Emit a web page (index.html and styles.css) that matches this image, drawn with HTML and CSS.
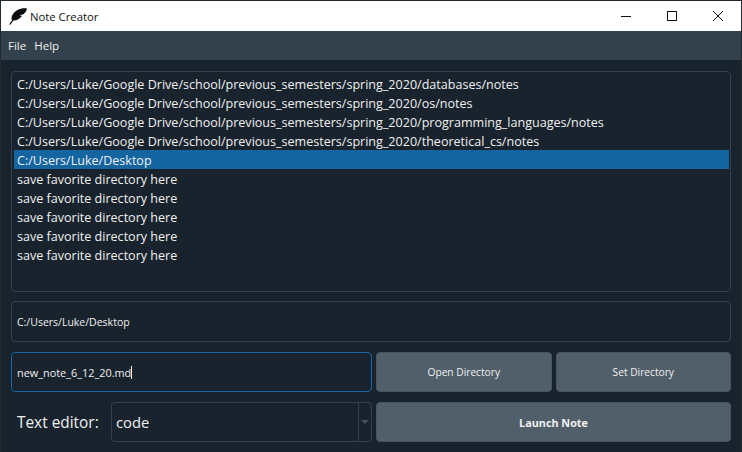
FILE: index.html
```html
<!DOCTYPE html>
<html>
<head>
	<title>Note Creator</title>
	<link rel="stylesheet" href="styles.css">
</head>
<body>
	<div class="window">
		<header class="titlebar">
			<svg class="appicon" width="18" height="17" viewBox="0 0 18 17">
				<path d="M0 16.500 L3 12.500 C1.500 9 4 4.500 8.500 2 C11.500 0.500 15 0 18 0.500 C17.500 3 16 5 14 6.500 L10.500 7 L13 8 C11 10.500 8 12.500 4.500 12.500 L1.500 16.500 Z" fill="#0a0a0a"/>
			</svg>
			<span class="title">Note Creator</span>
			<div class="winbuttons">
				<svg class="winbtn" width="10" height="10" viewBox="0 0 10 10"><path d="M0 5.500 H10" stroke="#111" fill="none"/></svg>
				<svg class="winbtn" width="10" height="10" viewBox="0 0 10 10"><rect x="0.500" y="0.500" width="9" height="9" stroke="#111" fill="none"/></svg>
				<svg class="winbtn" width="10" height="10" viewBox="0 0 10 10"><path d="M0 0 L10 10 M10 0 L0 10" stroke="#111" fill="none"/></svg>
			</div>
		</header>
		<nav class="menubar">
			<span>File</span>
			<span>Help</span>
		</nav>
		<main class="content">
			<ul class="dirlist">
				<li>C:/Users/Luke/Google Drive/school/previous_semesters/spring_2020/databases/notes</li>
				<li>C:/Users/Luke/Google Drive/school/previous_semesters/spring_2020/os/notes</li>
				<li>C:/Users/Luke/Google Drive/school/previous_semesters/spring_2020/programming_languages/notes</li>
				<li>C:/Users/Luke/Google Drive/school/previous_semesters/spring_2020/theoretical_cs/notes</li>
				<li class="selected">C:/Users/Luke/Desktop</li>
				<li>save favorite directory here</li>
				<li>save favorite directory here</li>
				<li>save favorite directory here</li>
				<li>save favorite directory here</li>
				<li>save favorite directory here</li>
			</ul>
			<div class="field pathfield">C:/Users/Luke/Desktop</div>
			<div class="row namerow">
				<div class="field namefield">new_note_6_12_20.md<span class="caret"></span></div>
				<button class="btn">Open Directory</button>
				<button class="btn">Set Directory</button>
			</div>
			<div class="row editorrow">
				<label class="editorlabel">Text editor:</label>
				<div class="combo">
					<span class="combotext">code</span>
					<span class="comboarrow"></span>
				</div>
				<button class="btn launch">Launch Note</button>
			</div>
		</main>
	</div>
</body>
</html>
```

FILE: styles.css
```css
* {
	box-sizing: border-box;
}
html, body {
	margin: 0;
	height: 100%;
}
body {
	background: #19232d;
	font-family: "Open Sans", "Noto Sans", sans-serif;
	overflow: hidden;
}
.window {
	height: 452px;
	display: flex;
	flex-direction: column;
	border: 1px solid #202a33;
	border-bottom: none;
}
.titlebar {
	height: 30px;
	background: #fff;
	display: flex;
	align-items: center;
	padding-left: 8px;
	flex: none;
}
.appicon {
	margin-right: 3px;
}
.title {
	font-size: 11.300px;
	color: #111;
}
.winbuttons {
	margin-left: auto;
	display: flex;
}
.winbtn {
	width: 46px;
	padding: 0 18px;
	height: 10px;
	overflow: visible;
	box-sizing: border-box;
}
.menubar {
	height: 29px;
	flex: none;
	background: #32414b;
	display: flex;
	align-items: center;
	gap: 8px;
	padding-left: 7px;
	font-size: 11.500px;
	color: #f0f0f0;
}
.content {
	flex: 1;
	padding: 11px 10px 0 10px;
	display: flex;
	flex-direction: column;
}
.dirlist {
	list-style: none;
	margin: 0;
	padding: 2px 1px 2px 2px;
	height: 221px;
	border: 1px solid #32414b;
	border-radius: 4px;
	font-size: 12.550px;
	color: #f0f0f0;
}
.dirlist li {
	height: 19px;
	line-height: 21px;
	padding-left: 3px;
	white-space: nowrap;
}
.dirlist .selected {
	background: #1464a0;
}
.field {
	border: 1px solid #32414b;
	border-radius: 4px;
	display: flex;
	align-items: center;
	font-size: 10.500px;
	color: #f0f0f0;
	padding-left: 5px;
}
.pathfield {
	height: 41px;
	margin-top: 9px;
}
.row {
	display: flex;
	gap: 4px;
}
.namerow {
	margin-top: 10px;
	height: 40px;
}
.namefield {
	flex: none;
	width: 361px;
	font-size: 10.900px;
	border-color: #1464a0;
}
.caret {
	width: 1px;
	height: 13px;
	background: #f0f0f0;
}
.btn {
	border: 1px solid #455364;
	border-radius: 4px;
	background: #505f69;
	color: #f0f0f0;
	font-family: inherit;
	font-size: 10.200px;
	flex: 1;
	padding: 0;
}
.editorrow {
	margin-top: 10px;
	height: 40px;
	align-items: stretch;
}
.editorlabel {
	flex: none;
	width: 94px;
	margin-left: 6px;
	margin-right: -4px;
	font-size: 15.400px;
	color: #f0f0f0;
	display: flex;
	align-items: center;
}
.combo {
	flex: none;
	width: 261px;
	border: 1px solid #32414b;
	border-radius: 4px;
	display: flex;
	align-items: center;
	justify-content: space-between;
	color: #f0f0f0;
	font-size: 14.800px;
	padding-left: 4px;
}
.comboarrow {
	width: 13px;
	height: 100%;
	border-left: 1px solid #32414b;
	position: relative;
}
.comboarrow::after {
	content: "";
	position: absolute;
	left: 2px;
	top: 17px;
	border-left: 4px solid transparent;
	border-right: 4px solid transparent;
	border-top: 4px solid #455364;
}
.launch {
	font-size: 10.800px;
	font-weight: 700;
}
```
